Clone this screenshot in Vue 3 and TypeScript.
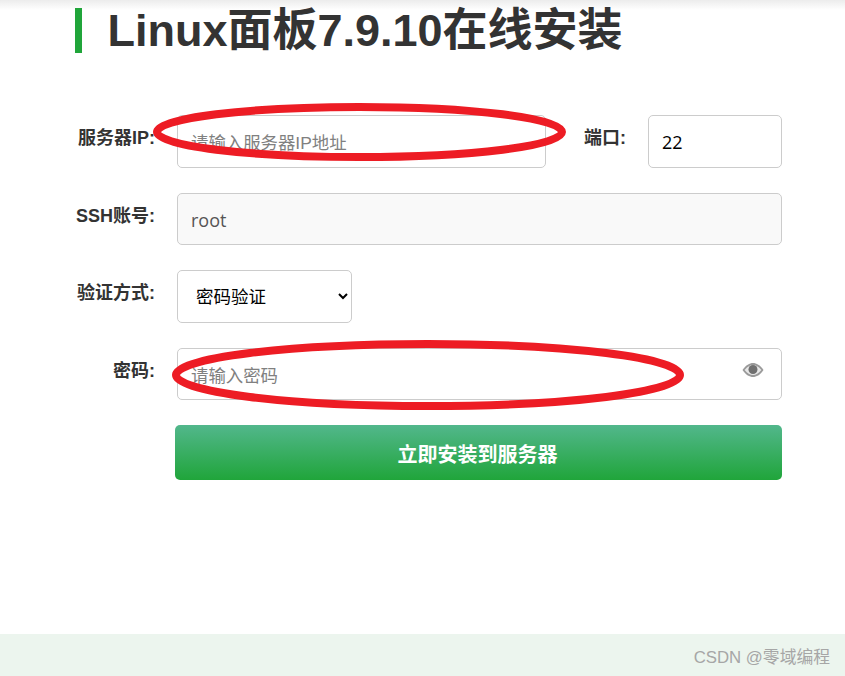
<script setup lang="ts">
</script>

<template>
  <div class="page">
    <div class="shade"></div>
    <main class="content">
      <h1 class="title">Linux面板7.9.10在线安装</h1>
      <form class="form" @submit.prevent>
        <div class="row row-a">
          <label class="label">服务器IP:</label>
          <input class="input grow" placeholder="请输入服务器IP地址" />
          <label class="label port-label">端口:</label>
          <input class="input port" value="22" />
        </div>
        <div class="row row-b">
          <label class="label">SSH账号:</label>
          <input class="input grow readonly" value="root" readonly />
        </div>
        <div class="row row-c">
          <label class="label">验证方式:</label>
          <select class="input select">
            <option>密码验证</option>
          </select>
        </div>
        <div class="row row-b">
          <label class="label">密码:</label>
          <div class="pass grow">
            <input class="input fill" placeholder="请输入密码" />
            <svg class="eye" viewBox="0 0 22 16" width="22" height="16" aria-hidden="true">
              <path d="M0.5 8C4 3 7.5 1 11 1s7 2 10.5 7C18 13 14.5 15 11 15S4 13 0.5 8Z" fill="#9a9a9a" />
              <path d="M2.6 8C5.5 4.4 8 3 11 3s5.5 1.4 8.4 5C16.5 11.6 14 13 11 13S5.500 11.600 2.600 8Z" fill="#e8e8e8" />
              <circle cx="11" cy="7.500" r="4.500" fill="#707070" />
            </svg>
          </div>
        </div>
        <div class="row submit-row">
          <button class="submit" type="button">立即安装到服务器</button>
        </div>
      </form>
    </main>
    <footer class="footer"><span class="mark">CSDN @零域编程</span></footer>
    <svg class="marks" width="845" height="676" viewBox="0 0 845 676" aria-hidden="true">
      <ellipse cx="359.500" cy="132" rx="202.500" ry="25" fill="none" stroke="#ed1c24" stroke-width="8" />
      <ellipse cx="428" cy="375" rx="252" ry="31" fill="none" stroke="#ed1c24" stroke-width="8" />
    </svg>
  </div>
</template>

<style>
html, body { margin: 0; background: #fff; }
</style>

<style scoped>
.page {
  position: relative;
  width: 845px;
  height: 676px;
  overflow: hidden;
  background: #fff;
  font-family: "Liberation Sans", "Noto Sans CJK SC", sans-serif;
  display: flex;
  flex-direction: column;
}
.shade {
  position: absolute;
  left: 0;
  right: 0;
  top: 0;
  height: 10px;
  background: linear-gradient(#ececec, #ffffff);
}
.content {
  position: relative;
  flex: 1;
  padding: 8px 63px 0 75px;
}
.title {
  margin: 0;
  height: 45px;
  line-height: 45px;
  padding-left: 25.500px;
  border-left: 7px solid #20a53a;
  font-size: 45px;
  font-weight: 700;
  color: #333;
  white-space: nowrap;
}
.form {
  margin-top: 62px;
  display: flex;
  flex-direction: column;
  gap: 25px;
}
.row {
  display: flex;
  align-items: flex-start;
}
.row-a, .row-c { height: 53px; }
.row-b { height: 52px; }
.label {
  flex: none;
  width: 80px;
  margin-right: 22px;
  padding-top: 13px;
  font-size: 18px;
  line-height: 20px;
  font-weight: 700;
  color: #333;
  text-align: right;
  white-space: nowrap;
}
.port-label {
  width: 42px;
  margin-left: 38px;
  text-align: left;
}
.input {
  box-sizing: border-box;
  height: 100%;
  border: 1px solid #ccc;
  border-radius: 5px;
  background: #fff;
  padding: 1px 13px 0;
  font-family: "Open Sans", "Noto Sans CJK SC", sans-serif;
  font-size: 18px;
  color: #000;
  outline: none;
}
.input::placeholder {
  color: #808080;
  font-family: "Liberation Sans", "Noto Sans CJK SC", sans-serif;
  font-size: 17.400px;
}
.grow { flex: 1; min-width: 0; }
.port { flex: none; width: 134px; }
.readonly { background: #f9f9f9; color: #555; }
.select {
  width: 175px;
  padding: 0 14px 1px;
  font-size: 17.500px;
}
.pass { position: relative; height: 100%; }
.fill { width: 100%; }
.eye {
  position: absolute;
  right: 18px;
  top: 14px;
}
.submit-row { padding-left: 100px; }
.submit {
  width: 100%;
  height: 55px;
  border: 0;
  border-radius: 5px;
  padding: 2px 8px 0 6px;
  background: linear-gradient(#52b78c, #20a53a);
  color: #fff;
  font-family: inherit;
  font-size: 20px;
  font-weight: 700;
}
.footer {
  height: 42px;
  flex: none;
  box-sizing: border-box;
  background: #ecf5ee;
  padding: 14px 15px 0 0;
  text-align: right;
}
.mark {
  font-size: 16.800px;
  line-height: 20px;
  color: #a6a6a6;
}
.marks {
  position: absolute;
  left: 0;
  top: 0;
  pointer-events: none;
}
</style>
